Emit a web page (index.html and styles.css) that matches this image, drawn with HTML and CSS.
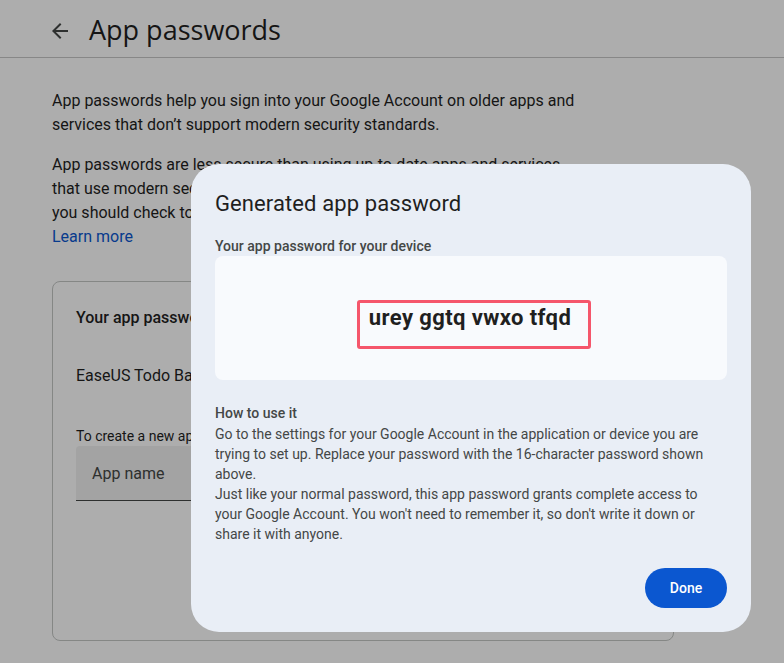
FILE: index.html
```html
<!DOCTYPE html>
<html>
<head>
  <title>App passwords</title>
  <link rel="stylesheet" href="styles.css">
</head>
<body>
<div class="page">
  <header class="topbar">
    <svg class="back" width="24" height="24" viewBox="0 0 24 24"><path d="M20 11H7.83l5.59-5.59L12 4l-8 8 8 8 1.41-1.41L7.83 13H20v-2z" fill="#444746"/></svg>
    <h1>App passwords</h1>
  </header>

  <main class="content">
    <p>App passwords help you sign into your Google Account on older apps and services that don’t support modern security standards.</p>
    <p>App passwords are less secure than using up-to-date apps and services that use modern security standards. Before you create an app password, you should check to see if your app needs this in order to sign in.<br>
    <a href="#" class="link">Learn more</a></p>

    <section class="card">
      <h2>Your app passwords</h2>
      <div class="app-row">EaseUS Todo Backup</div>
      <div class="hint">To create a new app specific password, type a name for it below...</div>
      <div class="field">App name</div>
    </section>
  </main>
</div>

<div class="scrim"></div>

<div class="dialog">
  <h2 class="dialog-title">Generated app password</h2>
  <div class="label">Your app password for your device</div>
  <div class="pw-box">
    <span class="pw">urey ggtq vwxo tfqd</span>
  </div>
  <div class="howto">
    <strong>How to use it</strong>
    <p>Go to the settings for your Google Account in the application or device you are trying to set up. Replace your password with the 16-character password shown above.<br>
    Just like your normal password, this app password grants complete access to your Google Account. You won't need to remember it, so don't write it down or share it with anyone.</p>
  </div>
  <div class="actions">
    <button class="done">Done</button>
  </div>
</div>
</body>
</html>
```

FILE: styles.css
```css
body {
  margin: 0;
  font-family: Roboto, "Liberation Sans", sans-serif;
  color: #1f1f1f;
  background-color: #fff;
  overflow: hidden;
}

.topbar {
  display: flex;
  align-items: center;
  height: 58px;
  padding: 2px 0 0 48px;
  box-sizing: border-box;
  border-bottom: 1px solid #c7c7c7;
}

.back {
  margin-top: 2px;
}

.topbar h1 {
  margin: 0 0 0 17px;
  font-family: "Open Sans", Roboto, sans-serif;
  font-weight: 400;
  font-size: 27px;
  line-height: 36px;
}

.content {
  padding: 31px 52px 0;
}

.content p {
  margin: 0 0 16px;
  width: 540px;
  font-size: 16px;
  line-height: 24px;
}

.link {
  color: #0b57d0;
  text-decoration: none;
}

.card {
  margin-top: 32px;
  width: 574px;
  height: 334px;
  padding: 12px 23px;
  border: 1px solid #c4c7c5;
  border-radius: 8px;
}

.card h2 {
  margin: 12px 0 0;
  font-size: 16px;
  font-weight: 500;
  line-height: 24px;
}

.app-row {
  margin-top: 34px;
  font-size: 16px;
  line-height: 24px;
}

.hint {
  margin-top: 38px;
  font-size: 14px;
  line-height: 20px;
  color: #1f1f1f;
}

.field {
  width: 330px;
  height: 54px;
  padding-left: 16px;
  display: flex;
  align-items: center;
  background-color: #f0f0f0;
  border-bottom: 1px solid #444746;
  border-radius: 4px 4px 0 0;
  font-size: 16px;
  color: #444746;
}

.scrim {
  position: fixed;
  inset: 0;
  background-color: rgba(0, 0, 0, 0.32);
}

.dialog {
  position: absolute;
  left: 191px;
  top: 164px;
  width: 512px;
  padding: 24px;
  background-color: #e9eef6;
  border-radius: 28px;
}

.dialog-title {
  margin: 0;
  font-family: Roboto, sans-serif;
  font-weight: 400;
  font-size: 22px;
  letter-spacing: 0.1px;
  line-height: 32px;
}

.label {
  margin-top: 16px;
  font-size: 14px;
  font-weight: 500;
  line-height: 20px;
  color: #444746;
}

.pw-box {
  height: 124px;
  display: flex;
  align-items: center;
  justify-content: center;
  background-color: #f8fafd;
  border-radius: 8px;
}

.pw {
  margin: 12px 0 0 6px;
  padding: 0 17px 14px 9px;
  border: 3px solid #f5566b;
  border-radius: 3px;
  font-size: 22px;
  font-weight: 700;
  letter-spacing: 0.4px;
  line-height: 29px;
  color: #1f1f1f;
}

.howto {
  margin-top: 23px;
  font-size: 14px;
  line-height: 20px;
  color: #444746;
}

.howto strong {
  display: block;
  font-weight: 500;
}

.howto p {
  margin: 1px 0 0;
}

.actions {
  display: flex;
  justify-content: flex-end;
  margin-top: 24px;
}

.done {
  width: 82px;
  height: 40px;
  border: none;
  border-radius: 20px;
  background-color: #0b57d0;
  color: #fff;
  font-family: Roboto, sans-serif;
  font-size: 14px;
  font-weight: 500;
}
```
